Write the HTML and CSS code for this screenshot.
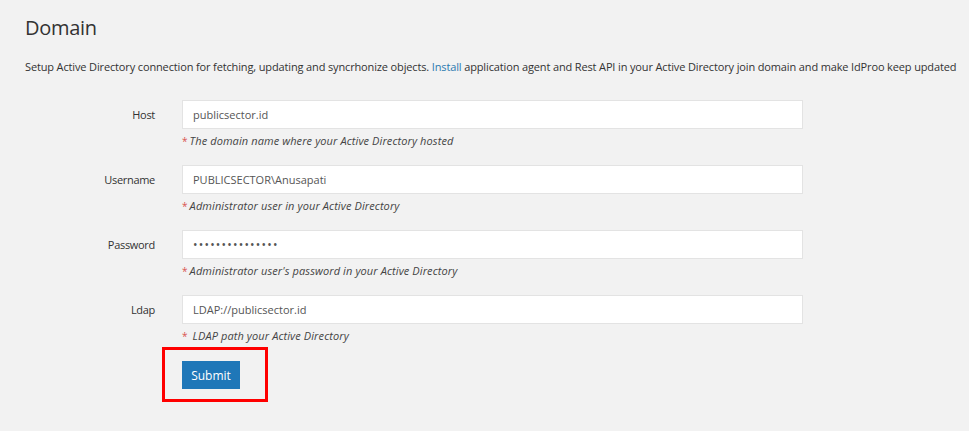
FILE: index.html
```html
<!DOCTYPE html>
<html lang="en">
<head>
<meta charset="utf-8">
<title>Domain</title>
<link rel="stylesheet" href="styles.css">
</head>
<body>
<div class="page">
  <h1 class="title">Domain</h1>
  <p class="desc">Setup Active Directory connection for fetching, updating and syncrhonize objects. <a class="link" href="#">Install</a> application agent and Rest API in your Active Directory join domain and make IdProo keep updated</p>
  <form class="form">
    <div class="group">
      <label class="label">Host</label>
      <div class="field">
        <input class="input" type="text" value="publicsector.id">
        <div class="help"><span class="req">*</span>The domain name where your Active Directory hosted</div>
      </div>
    </div>
    <div class="group">
      <label class="label">Username</label>
      <div class="field">
        <input class="input" type="text" value="PUBLICSECTOR\Anusapati">
        <div class="help"><span class="req">*</span>Administrator user in your Active Directory</div>
      </div>
    </div>
    <div class="group">
      <label class="label">Password</label>
      <div class="field">
        <input class="input" type="password" value="passwordsecret1">
        <div class="help"><span class="req">*</span>Administrator user's password in your Active Directory</div>
      </div>
    </div>
    <div class="group last">
      <label class="label">Ldap</label>
      <div class="field">
        <input class="input" type="text" value="LDAP://publicsector.id">
        <div class="help"><span class="req">*</span> LDAP path your Active Directory</div>
      </div>
    </div>
    <div class="group actions">
      <span class="label"></span>
      <div class="field">
        <span class="highlight"><button class="btn" type="button">Submit</button></span>
      </div>
    </div>
  </form>
</div>
</body>
</html>
```
FILE: styles.css
```css
*, *::before, *::after { box-sizing: border-box; }
html, body { margin: 0; padding: 0; }
body {
  background: #f2f2f2;
  font-family: "Open Sans", "Noto Sans", sans-serif;
  color: #333;
  height: 431px;
  overflow: hidden;
}
.page { padding: 17px 25px 0 25px; }
.title {
  margin: 0;
  font-size: 20px;
  line-height: 22px;
  font-weight: 400;
  letter-spacing: -0.3px;
  color: #333;
}
.desc {
  margin: 19px 0 0 0;
  font-size: 11px;
  letter-spacing: -0.14px;
  line-height: 17px;
  color: #333;
  white-space: nowrap;
}
.link { color: #2a7ab0; text-decoration: none; }
.form { margin-top: 25px; }
.group {
  display: grid;
  grid-template-columns: 130px 621px;
  column-gap: 27px;
  margin-bottom: 15px;
}
.group.last { margin-top: 1px; margin-bottom: 16px; }
.label {
  font-size: 11px;
  letter-spacing: -0.3px;
  line-height: 29px;
  text-align: right;
  color: #333;
}
.input {
  display: block;
  width: 100%;
  height: 29px;
  margin: 0;
  padding: 0 10px;
  border: 1px solid #e3e3e3;
  background: #fff;
  font-family: "Open Sans", "Noto Sans", sans-serif;
  font-size: 11px;
  color: #555;
  outline: none;
}
.input[type="password"] { letter-spacing: 1.2px; font-size: 12px; color: #555; }
.help {
  margin-top: 3px;
  font-size: 11px;
  letter-spacing: 0.1px;
  line-height: 17px;
  font-style: italic;
  color: #444;
}
.req { color: #d9534f; margin-right: 2px; font-style: normal; font-size: 10px; }
.highlight {
  position: relative;
  display: inline-block;
  vertical-align: top;
}
.highlight::after {
  content: "";
  position: absolute;
  left: -20px;
  top: -14px;
  width: 106px;
  height: 55px;
  border: 3px solid #ff0000;
}
.btn {
  display: block;
  width: 58px;
  height: 28px;
  padding: 0;
  border: none;
  background: #1f77b8;
  color: #fff;
  font-family: "Open Sans", "Noto Sans", sans-serif;
  font-size: 12px;
}
```
